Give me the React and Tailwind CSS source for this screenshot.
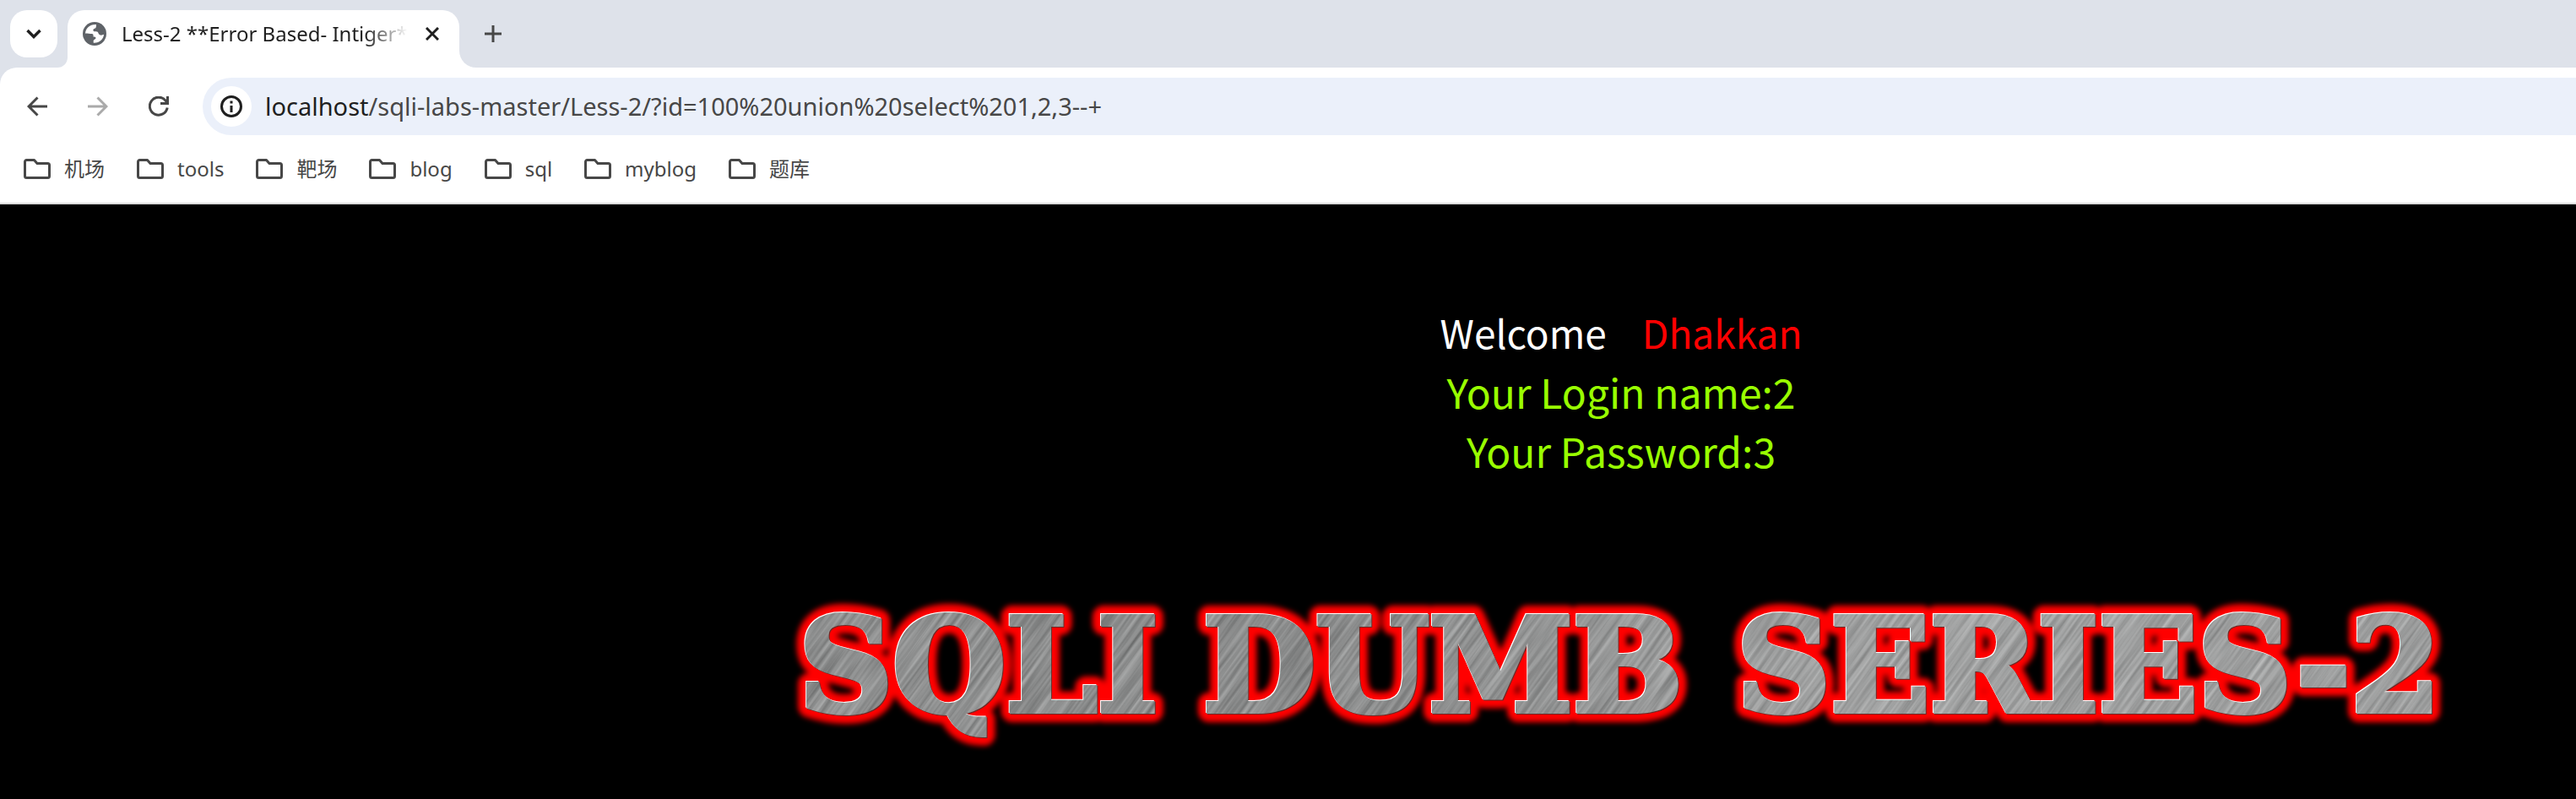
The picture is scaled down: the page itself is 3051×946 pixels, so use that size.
import { useId } from "react";

const bookmarks = ["机场", "tools", "靶场", "blog", "sql", "myblog", "题库"];

const words = [
  { x: 263, text: "SQLI" },
  { x: 813, text: "DUMB" },
  { x: 1578, text: "SERIES-2" },
];

function FolderIcon() {
  return (
    <svg className="h-6 w-8 shrink-0" viewBox="0 0 32 24" fill="none" stroke="#474747" strokeWidth="3" strokeLinejoin="round" aria-hidden="true">
      <path d="M1.500 3.500a2 2 0 0 1 2-2H12.500l3.500 4h12.500a2 2 0 0 1 2 2V20.500a2 2 0 0 1-2 2h-25a2 2 0 0 1-2-2z" />
    </svg>
  );
}

function GlobeIcon() {
  return (
    <svg className="h-7 w-7 shrink-0" viewBox="0 0 28 28" aria-hidden="true">
      <circle cx="14" cy="14" r="14" fill="#5f6368" />
      <path
        fill="#fff"
        d="M16 3C9 2.400 3.500 7 3 13.500c2.500.6 5.500.2 8 .5 2 .4 1.500 2.200 1.500 3.500 1.500.3 3 .2 3 1.500 0 1.700-2.500 1.500-2.800 3v2.800C19.500 25.300 24.800 20.500 25 14.800c-1.600.9-3.700 1.200-5.200.3-1.500-1-1-2.800-2.600-3.600-1.500-.7-4.500.4-4.800-1.600-.2-2 2.400-2 3.100-3.200.5-1 .5-2.500.5-3.700z"
      />
    </svg>
  );
}

function Words({ layer, ...rest }) {
  return words.map((w) => (
    <text key={layer + w.text} x={w.x} y="151" textAnchor="middle" strokeLinejoin="miter" {...rest}>
      {w.text}
    </text>
  ));
}

function Banner() {
  const id = useId().replace(/[^a-zA-Z0-9]/g, "");
  return (
    <svg
      className="block h-auto w-[2048px] max-w-full font-['DejaVu_Serif',serif] text-[154px] leading-none font-bold"
      viewBox="0 0 2048 200"
      role="img"
      aria-label="SQLI DUMB SERIES-2"
    >
      <defs>
        <filter id={id + "brushed"} x="0" y="0" width="100%" height="100%" colorInterpolationFilters="sRGB">
          <feTurbulence type="fractalNoise" baseFrequency="0.220 0.008" numOctaves="3" seed="4" />
          <feColorMatrix values=".34 0 0 0 .41  .34 0 0 0 .415  .34 0 0 0 .415  0 0 0 0 1" />
        </filter>
        <filter id={id + "glow"} x="-5%" y="-20%" width="110%" height="140%">
          <feGaussianBlur stdDeviation="3" />
        </filter>
        <mask id={id + "letters"} maskUnits="userSpaceOnUse" x="0" y="0" width="2048" height="200">
          <Words layer="mask" fill="#fff" stroke="#fff" strokeWidth="6" />
        </mask>
        <linearGradient id={id + "sheen"}>
          <stop offset="0" stopColor="#000" stopOpacity=".04" />
          <stop offset=".3" stopColor="#000" stopOpacity=".06" />
          <stop offset=".6" stopColor="#fff" stopOpacity=".1" />
          <stop offset="1" stopColor="#fff" stopOpacity=".08" />
        </linearGradient>
      </defs>
      <g aria-hidden="true" filter={`url(#${id}glow)`}>
        <Words layer="glow" fill="#f00" stroke="#f00" strokeWidth="26" strokeLinejoin="round" />
      </g>
      <g aria-hidden="true" transform="translate(1 1)">
        <Words layer="shade" fill="#6b2a26" stroke="#6b2a26" strokeWidth="6" />
      </g>
      <g aria-hidden="true" transform="translate(-1 -1)">
        <Words layer="light" fill="#fff" stroke="#fff" strokeWidth="6" />
      </g>
      <g mask={`url(#${id}letters)`} aria-hidden="true">
        <rect width="2400" height="2400" x="-200" y="-1500" transform="rotate(36)" filter={`url(#${id}brushed)`} />
        <rect width="2048" height="200" fill={`url(#${id}sheen)`} />
      </g>
    </svg>
  );
}

export default function App() {
  return (
    <div className="flex min-h-screen flex-col bg-black font-['Noto_Sans','Noto_Sans_CJK_SC',sans-serif] text-[#474747]">
      <header className="bg-[#dee2ea]">
        <div className="flex h-20 items-end pl-3">
          <button type="button" aria-label="Search tabs" className="mb-3 flex h-14 w-14 items-center justify-center rounded-[20px] bg-white">
            <svg className="h-4 w-5" viewBox="0 0 20 16" fill="none" stroke="#1f1f1f" strokeWidth="3.500" aria-hidden="true">
              <path d="M2.500 4l7.500 7.500L17.500 4" />
            </svg>
          </button>
          <div className="flex h-[68px] items-end">
            <div className="h-5 w-3 bg-white">
              <div className="h-5 w-3 rounded-br-[20px] bg-[#dee2ea]" />
            </div>
            <div className="flex h-[68px] w-[464px] items-center rounded-t-[20px] bg-white pr-4 pb-3 pl-[18px]">
              <GlobeIcon />
              <span className="ml-[18px] bg-linear-to-r from-[#1f1f1f] from-85% to-transparent bg-clip-text text-[24px] leading-8 whitespace-nowrap text-transparent">
                Less-2 **Error Based- Intiger*
              </span>
              <button type="button" aria-label="Close tab" className="ml-auto flex h-8 w-8 items-center justify-center">
                <svg className="h-4 w-4" viewBox="0 0 16 16" stroke="#1f1f1f" strokeWidth="3" aria-hidden="true">
                  <path d="M1 1l14 14M15 1L1 15" />
                </svg>
              </button>
            </div>
            <div className="h-5 w-5 bg-white">
              <div className="h-5 w-5 rounded-bl-[20px] bg-[#dee2ea]" />
            </div>
          </div>
          <button type="button" aria-label="New tab" className="mb-5 flex h-10 w-10 items-center justify-center">
            <svg className="h-5 w-5" viewBox="0 0 20 20" stroke="#474747" strokeWidth="3" aria-hidden="true">
              <path d="M10 0v20M0 10h20" />
            </svg>
          </button>
        </div>
        <div className="rounded-tl-[20px] border-b-2 border-[#dcdcdc] bg-white">
          <div className="flex items-center pt-3">
            <nav className="flex w-60 items-center gap-12 pl-8" aria-label="History">
              <button type="button" aria-label="Back" className="h-6 w-6">
                <svg viewBox="0 0 24 24" fill="none" stroke="#474747" strokeWidth="3" aria-hidden="true">
                  <path d="M24 12H2M12.500 1.500L2 12l10.500 10.500" />
                </svg>
              </button>
              <button type="button" aria-label="Forward" className="h-6 w-6" disabled>
                <svg viewBox="0 0 24 24" fill="none" stroke="#aaa" strokeWidth="3" aria-hidden="true">
                  <path d="M0 12h22M11.500 1.500L22 12 11.500 22.500" />
                </svg>
              </button>
              <button type="button" aria-label="Reload" className="h-6 w-6">
                <svg viewBox="0 0 24 24" fill="none" stroke="#474747" strokeWidth="3" aria-hidden="true">
                  <path d="M22.200 13.500A10.500 10.500 0 1 1 20 5L22 7.500M22.500 0v8.500H14" />
                </svg>
              </button>
            </nav>
            <div className="flex h-[68px] flex-1 items-center rounded-l-full bg-[#ebf0fa] pl-[10px]">
              <button type="button" aria-label="View site information" className="flex h-12 w-12 items-center justify-center rounded-full bg-white">
                <svg className="h-[26px] w-[26px]" viewBox="0 0 26 26" fill="none" stroke="#1f1f1f" strokeWidth="3" aria-hidden="true">
                  <circle cx="13" cy="13" r="11.500" />
                  <path d="M13 12v8M13 6.500v3" />
                </svg>
              </button>
              <a href="/sqli-labs-master/Less-2/?id=100%20union%20select%201,2,3--+" className="ml-4 text-[29px] leading-10 whitespace-nowrap">
                <span className="text-[#1f1f1f]">localhost</span>/sqli-labs-master/Less-2/?id=100%20union%20select%201,2,3--+
              </a>
            </div>
          </div>
          <nav aria-label="Bookmarks" className="flex h-20 items-center gap-[38px] pl-7">
            {bookmarks.map((name) => (
              <a key={name} href="#" className="flex items-center gap-4 text-[24px] leading-8">
                <FolderIcon />
                {name}
              </a>
            ))}
          </nav>
        </div>
      </header>
      <main className="flex flex-1 flex-col items-center pt-[116px] pl-[789px] font-['Noto_Sans_CJK_SC',sans-serif] text-[48px] leading-[70px]">
        <div className="text-center text-[#9f0]">
          <p className="flex justify-center gap-[42px] text-[46px]">
            <span className="text-white">Welcome</span>
            <span className="text-[#f00]">Dhakkan</span>
          </p>
          <p>Your Login name:2</p>
          <p>Your Password:3</p>
        </div>
        <div className="mt-[123px]">
          <Banner />
        </div>
      </main>
    </div>
  );
}
